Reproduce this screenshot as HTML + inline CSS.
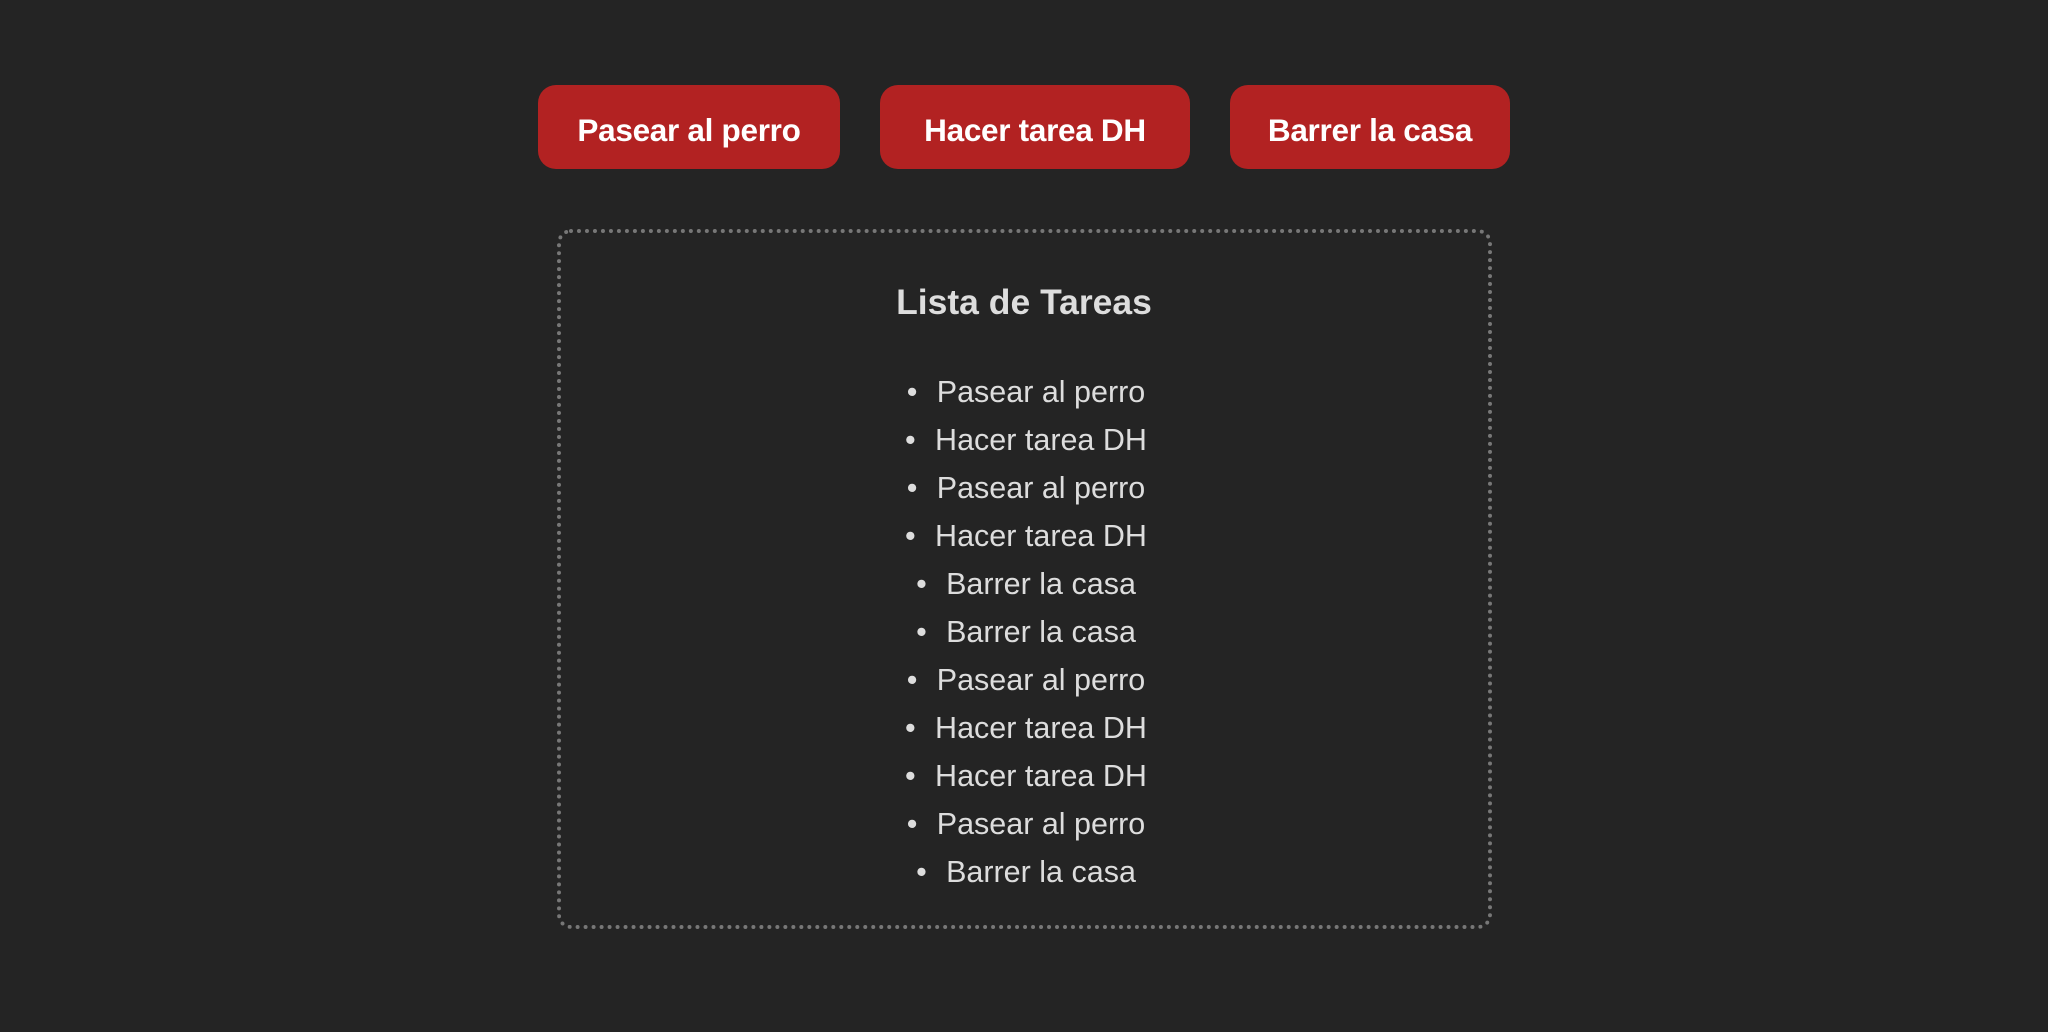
<!DOCTYPE html>
<html><head><meta charset="utf-8"><style>
html,body{margin:0;padding:0;background:#242424;width:2048px;height:1032px;overflow:hidden;font-family:"Liberation Sans",sans-serif;}
.btn{position:absolute;top:85px;height:84px;background:#b22222;border-radius:18px;color:#fff;font-weight:bold;font-size:31.5px;display:flex;align-items:center;justify-content:center;letter-spacing:-0.3px;box-sizing:border-box;padding-top:6px}
.box{position:absolute;left:557px;top:229px;width:935px;height:700px;border:4px dotted #777;border-radius:14px;box-sizing:border-box;}
h2{position:absolute;left:0;right:0;top:280px;margin:0;text-align:center;color:#ddd;font-size:35.5px;font-weight:bold;line-height:44px}
ul{position:absolute;left:0;width:2052px;top:368px;margin:0;padding:0;list-style:none;text-align:center;color:#ddd;font-size:30.5px;line-height:48px}
li::before{content:"•";display:inline-block;width:30px;text-align:left}
</style></head><body>
<div class="btn" style="left:538px;width:302px">Pasear al perro</div>
<div class="btn" style="left:880px;width:310px">Hacer tarea DH</div>
<div class="btn" style="left:1230px;width:280px">Barrer la casa</div>
<div class="box"></div>
<h2>Lista de Tareas</h2>
<ul>
<li>Pasear al perro</li>
<li>Hacer tarea DH</li>
<li>Pasear al perro</li>
<li>Hacer tarea DH</li>
<li>Barrer la casa</li>
<li>Barrer la casa</li>
<li>Pasear al perro</li>
<li>Hacer tarea DH</li>
<li>Hacer tarea DH</li>
<li>Pasear al perro</li>
<li>Barrer la casa</li>
</ul>
</body></html>
